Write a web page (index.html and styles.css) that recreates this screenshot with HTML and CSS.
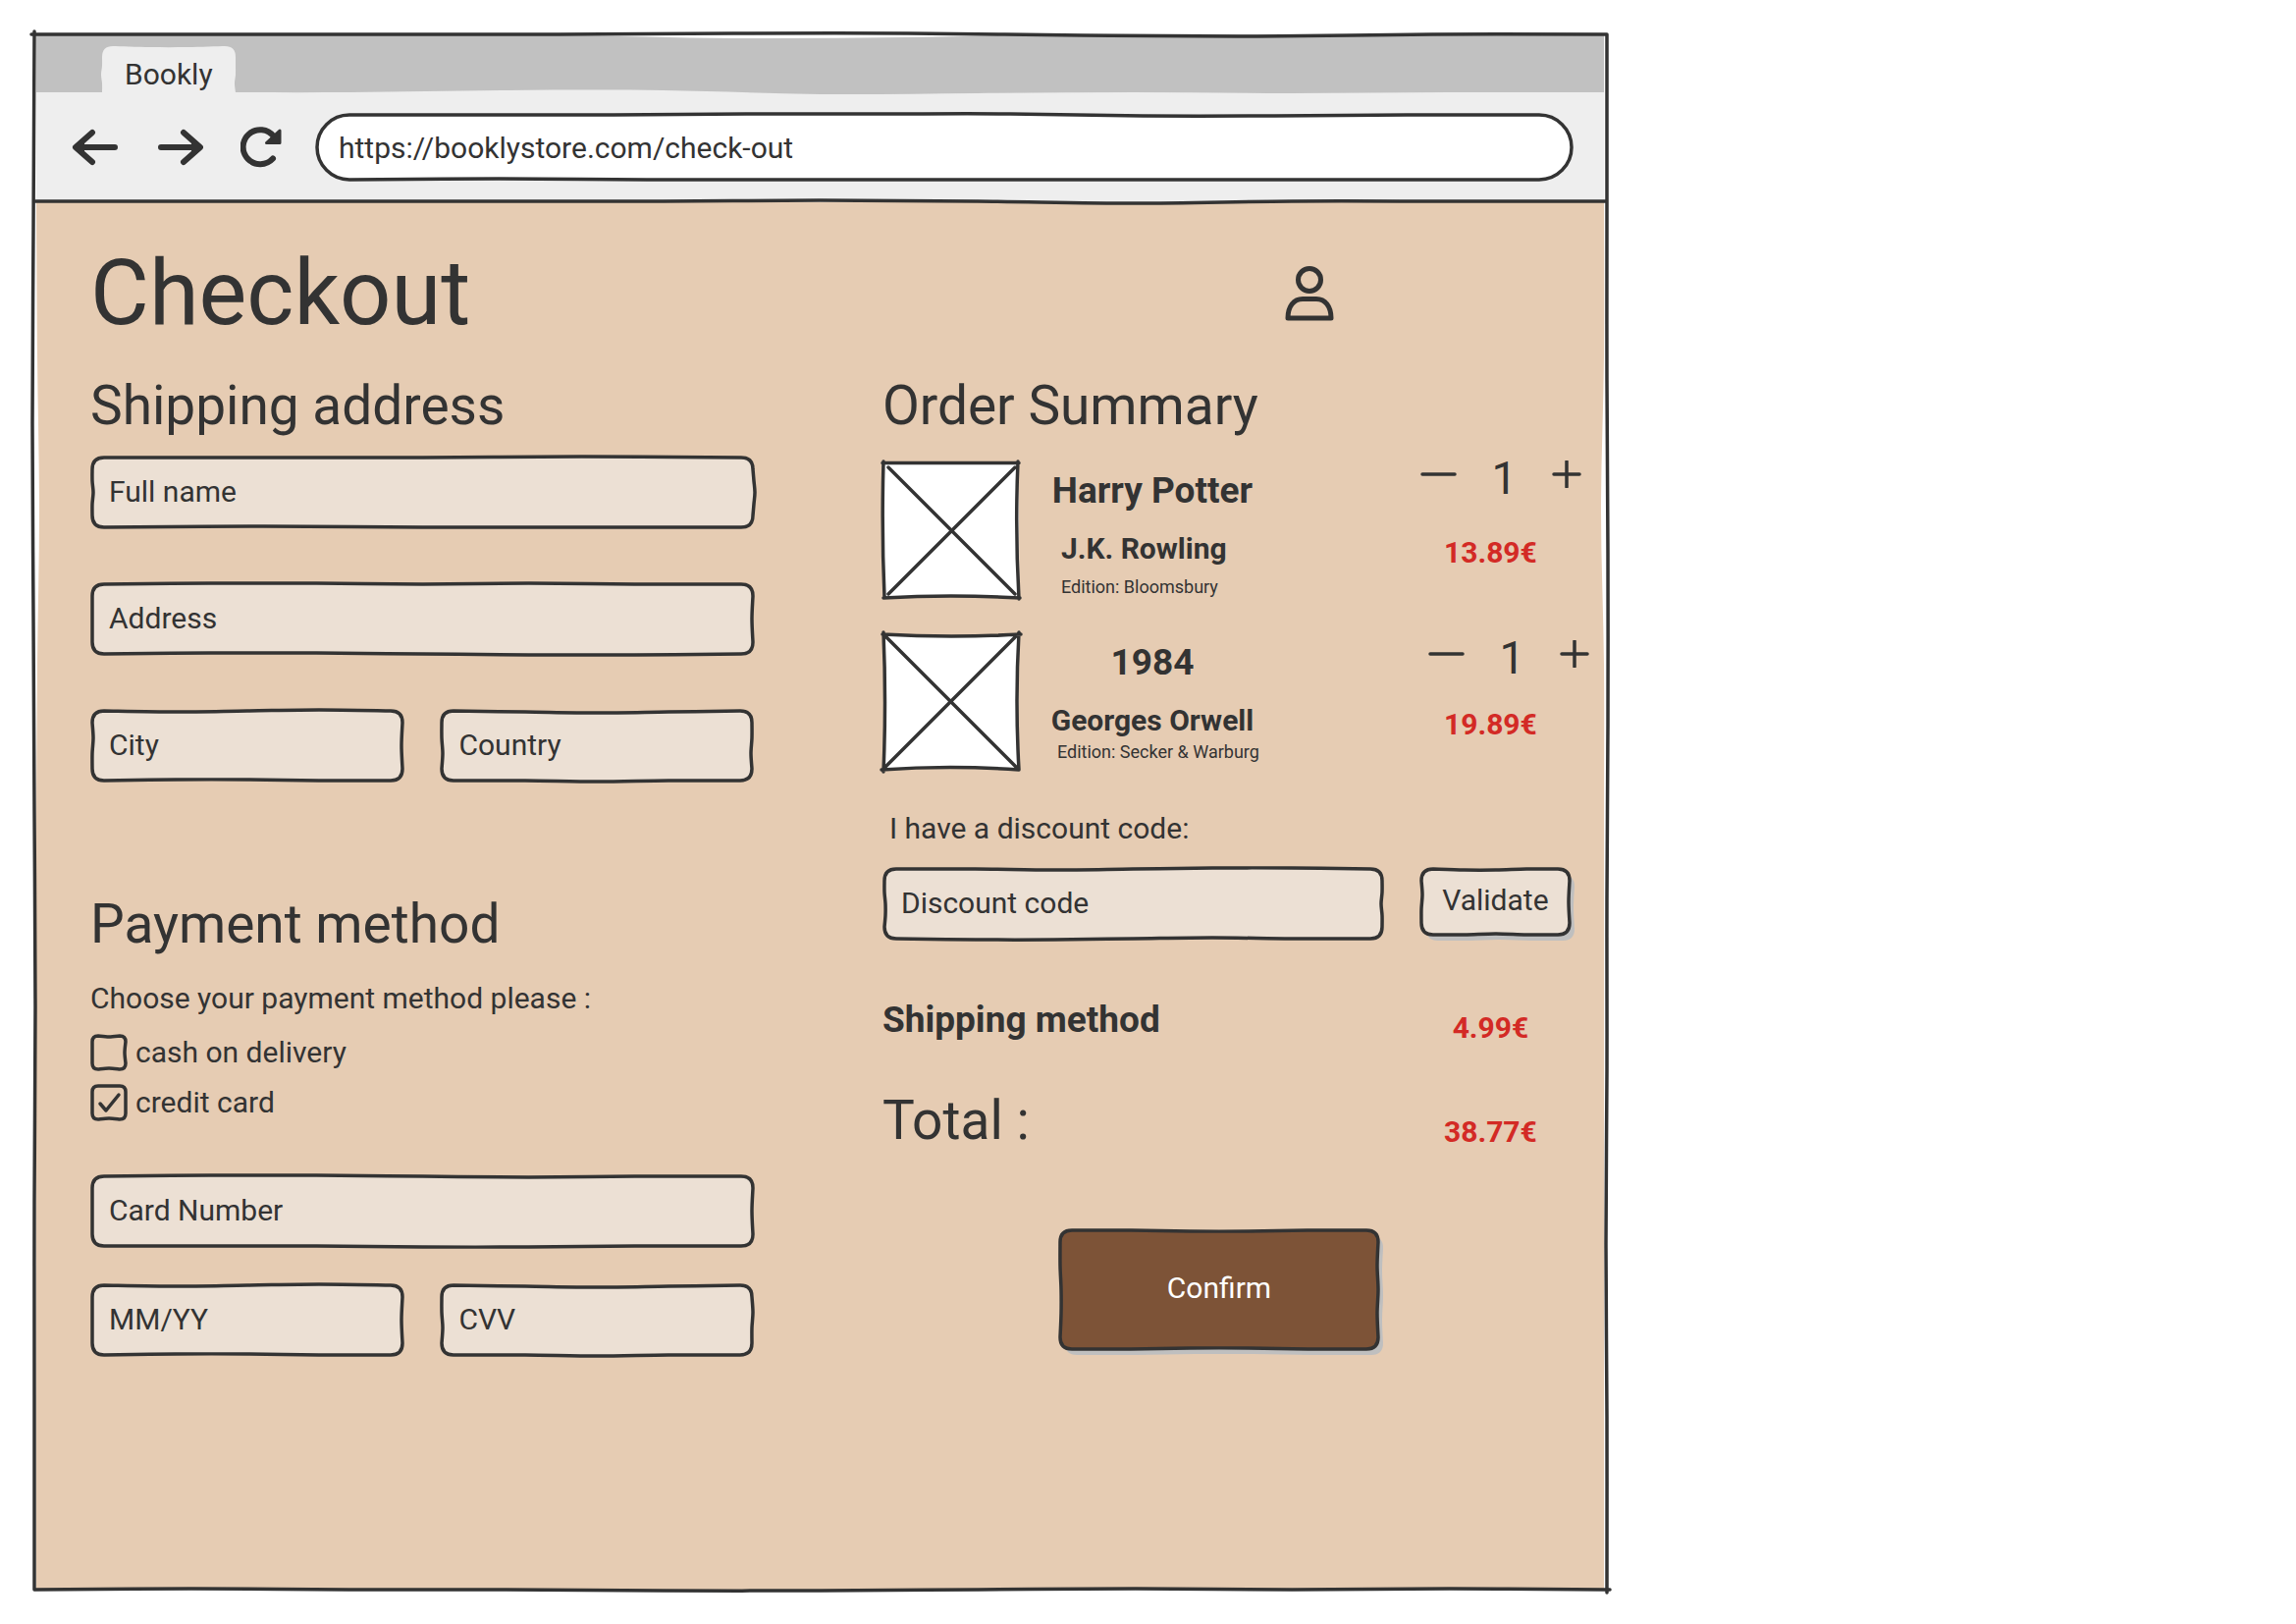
FILE: index.html
```html
<!DOCTYPE html>
<html lang="en">
<head>
<meta charset="utf-8">
<meta name="viewport" content="width=device-width, initial-scale=1">
<title>Bookly – Checkout</title>
<link rel="stylesheet" href="styles.css">
<script src="sketch.js" defer></script>
</head>
<body>
<div class="window sketch" data-radius="0" data-over="3" data-top="0 0 0 -1 -1 1 2 0" data-right="0 0 1 1 0 0 -1 0" data-bottom="-1 0 0 1 1 0 -1 0 -1" data-left="-1 -2 -1 0 1 0 0">
  <div class="tab-strip sketch fill" data-radius="0" data-top="0 0 1 4 3 0 0 0" data-bottom="0 0 -2 -2 2 1 0 1 0">
    <div class="tab sketch fill" data-radius="11" data-top="1 1" data-left="0 -1 0" data-right="0 0 -1">Bookly</div>
  </div>
  <div class="toolbar">
    <nav class="nav" aria-label="Browser">
      <button type="button" class="icon-button" aria-label="Back">
        <svg width="48" height="48" viewBox="0 0 48 48"><path d="M44 24H6M21 9 4 24l17 15" class="nav-stroke"/><path d="M1 24 13 13v22z" class="solid"/></svg>
      </button>
      <button type="button" class="icon-button" aria-label="Forward">
        <svg width="48" height="48" viewBox="0 0 48 48"><path d="M5 24h38M28 9l17 15-17 15" class="nav-stroke"/><path d="M48 24 36 13v22z" class="solid"/></svg>
      </button>
      <button type="button" class="icon-button" aria-label="Reload">
        <svg width="48" height="48" viewBox="0 0 48 48"><path d="M33 35.500A17.500 17.500 0 1 1 34 13" class="nav-stroke"/><path d="M40 7v12.500H26.500z" class="solid joint"/></svg>
      </button>
    </nav>
    <div class="address sketch" data-radius="35" data-top="0 0 -1 -1 -1 1 1 0" data-bottom="-1 0 0 0 0 0 0">
      <input type="text" aria-label="Web address" value="https://booklystore.com/check-out">
    </div>
  </div>
  <div class="rule sketch line" data-top="0 0 0 0 -1 0 2 0 0"></div>

  <main class="content sketch fill" data-radius="0" data-left="1 3 1 0 0 0 0 0" data-right="0 -3 0 0 0 0 0 0">
    <header class="columns">
      <h1>Checkout</h1>
      <a class="account" href="#account" aria-label="Account">
        <svg width="50" height="60" viewBox="0 0 50 60"><circle cx="25" cy="16" r="11.500"/><path d="M3 55c0-12 6-19.500 15-19.500h14c9 0 15 7.500 15 19.500z"/></svg>
      </a>
    </header>

    <div class="columns">
      <form class="details" onsubmit="return false">
        <section>
          <h2>Shipping address</h2>
          <div class="fields roomy">
            <div class="field sketch wide" data-top="0 0 -1" data-right="1 2 1" data-bottom="-1 0 0" data-left="0 1 0">
              <input type="text" aria-label="Full name" placeholder="Full name">
            </div>
            <div class="field sketch wide" data-top="-1 -1 0 -1 0" data-right="-1" data-bottom="-1 -1 0 1 1">
              <input type="text" aria-label="Address" placeholder="Address">
            </div>
            <div class="field sketch" data-top="1 0 -1" data-right="-1" data-bottom="-1 -1 0" data-left="1 0">
              <input type="text" aria-label="City" placeholder="City">
            </div>
            <div class="field sketch" data-top="1 2 1" data-right="0 -1" data-bottom="0 1 0" data-left="0 1">
              <input type="text" aria-label="Country" placeholder="Country">
            </div>
          </div>
        </section>

        <section class="payment">
          <h2>Payment method</h2>
          <p class="prompt" id="prompt">Choose your payment method please :</p>
          <div class="choices" role="group" aria-labelledby="prompt">
            <div class="choice">
              <span class="box sketch" data-radius="6" data-top="1" data-right="-1" data-bottom="-1"><input id="cash" type="checkbox"><svg class="check" width="38" height="38" viewBox="0 0 38 38"><path d="m10 20 6 7L29 11"/></svg></span>
              <label for="cash">cash on delivery</label>
            </div>
            <div class="choice">
              <span class="box sketch" data-radius="6" data-bottom="-1"><input id="card" type="checkbox" checked><svg class="check" width="38" height="38" viewBox="0 0 38 38"><path d="m10 20 6 7L29 11"/></svg></span>
              <label for="card">credit card</label>
            </div>
          </div>
          <div class="fields">
            <div class="field sketch wide" data-top="-1 -1 0 1 0" data-right="-1" data-bottom="0 0 1 1 0">
              <input type="text" aria-label="Card Number" placeholder="Card Number">
            </div>
            <div class="field sketch" data-top="1 0 -1" data-right="-1" data-bottom="-1 -1 0">
              <input type="text" aria-label="Expiry date" placeholder="MM/YY">
            </div>
            <div class="field sketch" data-top="1 2 1" data-right="1 0" data-bottom="0 1 0" data-left="0 1">
              <input type="text" aria-label="CVV" placeholder="CVV">
            </div>
          </div>
        </section>
      </form>

      <section class="summary">
        <h2>Order Summary</h2>
        <div class="items">
          <article class="item">
            <svg class="cover" width="142" height="142" viewBox="1 0 142 142" role="img" aria-label="Cover of Harry Potter"><path class="paper" d="M2 2.500h137.500l1 137Q70 137 2 140z"/><path d="M1 2.500h139M139 1q-3 68 1 140M141 140Q70 136 2 140M3 139Q0 70 2 1M7 7l129 129M136 7 7 136"/></svg>
            <div class="info">
              <h3>Harry Potter</h3>
              <p class="author flush">J.K. Rowling</p>
              <p class="edition">Edition: Bloomsbury</p>
            </div>
            <div class="buy">
              <div class="quantity">
                <button type="button" class="icon-button" aria-label="Fewer copies of Harry Potter"><svg width="37" height="28" viewBox="0 0 37 28"><path d="M2 14h33" class="thin"/></svg></button>
                <output>1</output>
                <button type="button" class="icon-button" aria-label="More copies of Harry Potter"><svg width="30" height="28" viewBox="0 0 30 28"><path d="M2 14h26M15 1v26" class="thin"/></svg></button>
              </div>
              <span class="price">13.89€</span>
            </div>
          </article>
          <article class="item compact">
            <svg class="cover" width="142" height="142" viewBox="1 0 142 142" role="img" aria-label="Cover of 1984"><path class="paper" d="M2 2.500q70 3 137.500 0v137Q70 136 2 140z"/><path d="M1 2q70 4 141 0M140 0q-4 70 0 140M140 140Q70 135 0 140M2 142q3-70 0-142M2 2l137 137M139 2 2 139"/></svg>
            <div class="info">
              <h3>1984</h3>
              <p class="author">Georges Orwell</p>
              <p class="edition">Edition: Secker &amp; Warburg</p>
            </div>
            <div class="buy">
              <div class="quantity">
                <button type="button" class="icon-button" aria-label="Fewer copies of 1984"><svg width="37" height="28" viewBox="0 0 37 28"><path d="M2 14h33" class="thin"/></svg></button>
                <output>1</output>
                <button type="button" class="icon-button" aria-label="More copies of 1984"><svg width="30" height="28" viewBox="0 0 30 28"><path d="M2 14h26M15 1v26" class="thin"/></svg></button>
              </div>
              <span class="price">19.89€</span>
            </div>
          </article>
        </div>

        <label class="discount-label" for="discount">I have a discount code:</label>
        <div class="discount">
          <div class="field sketch" data-top="0 1 0 -1 -1" data-right="0 -1 0" data-bottom="1 1 0 -1 0" data-left="0 1 1">
            <input id="discount" type="text" placeholder="Discount code">
          </div>
          <button type="button" class="button sketch" data-shadow="1" data-top="1 1 0" data-right="-1" data-bottom="0 -1 0" data-left="1 0">Validate</button>
        </div>

        <div class="line-item"><h3>Shipping method</h3><span class="price">4.99€</span></div>
        <div class="line-item"><h2>Total :</h2><span class="price">38.77€</span></div>
        <button type="button" class="button confirm sketch" data-shadow="1" data-top="0 1 1 0" data-right="-1 0 -1" data-bottom="0 -1 -1 0" data-left="0 1 1">Confirm</button>
      </section>
    </div>
  </main>
</div>
</body>
</html>
```

FILE: styles.css
```css
:root {
  --ink: #333;
  --sand: #e6ccb3;
  --cream: #ece0d4;
  --cocoa: #7d5337;
  --red: #d32a25;
}

* { box-sizing: border-box; }

body {
  margin: 0;
  padding: 35px;
  background: #fff;
  color: var(--ink);
  font: 30px/36px Roboto, "Liberation Sans", sans-serif;
}

h1, h2, h3, p { margin: 0; }
h1 { font-size: 92px; line-height: 108px; font-weight: 400; }
h2 { font-size: 55px; line-height: 64px; font-weight: 400; }
h3 { font-size: 37px; line-height: 44px; font-weight: 700; }

input, button {
  font: inherit;
  color: inherit;
  border: 0;
  background: none;
  padding: 0;
}
input { width: 100%; min-width: 0; }
input::placeholder { color: var(--ink); opacity: 1; }
button { cursor: pointer; }

/* Hand-drawn outlines, filled in by sketch.js */
.sketch { position: relative; isolation: isolate; --fill: none; --line: var(--ink); }
.sketch.fill { --line: none; }
.outline {
  position: absolute;
  inset: 0;
  z-index: -1;
  width: 100%;
  height: 100%;
  overflow: visible;
  pointer-events: none;
}
.outline .body {
  fill: var(--fill);
  stroke: var(--line);
  stroke-width: 3.5px;
  stroke-linecap: round;
  stroke-linejoin: round;
}
.outline .shadow { fill: #bfbfbf; }

/* Browser window */
.window {
  display: flex;
  flex-direction: column;
  width: 70.6%;
  min-width: 1400px;
  min-height: calc(100vh - 70px);
}
.window > .outline { z-index: 2; }
.tab-strip {
  --fill: #c1c1c1;
  z-index: 1;
  display: flex;
  height: 59px;
  margin: 0 3px 0 2px;
  padding: 12px 67px 0;
}
.tab { --fill: #eee; height: 47px; padding: 19px 23px 0; line-height: 20px; }
.toolbar {
  display: flex;
  align-items: center;
  gap: 28px;
  height: 115px;
  margin: -4px 3px 0 2px;
  padding: 4px 31px 0 36px;
  background: #eee;
}
.rule { height: 1px; margin-right: 1px; z-index: 1; }
.nav { display: flex; gap: 38px; }
.icon-button { display: block; flex: none; }
.icon-button svg { display: block; }
.nav-stroke { fill: none; stroke: var(--ink); stroke-width: 6px; stroke-linecap: round; stroke-linejoin: round; }
.solid { fill: var(--ink); }
.joint { stroke: var(--ink); stroke-width: 3px; stroke-linejoin: round; }
.thin { fill: none; stroke: var(--ink); stroke-width: 3.5px; stroke-linecap: round; }
.address { --fill: #fff; flex: 1; display: flex; height: 70px; padding: 3px 24px 0; }

/* Page */
.content {
  --fill: var(--sand);
  flex: 1;
  margin: 0 3px 0 2px;
  padding: 39px 15px 56px 55px;
}
.columns {
  display: grid;
  grid-template-columns: 677fr 720fr;
  column-gap: 130px;
}
header.columns { margin-bottom: 28px; }
.account { justify-self: start; align-self: start; margin: 24px 0 0 410px; }
.account svg { display: block; fill: none; stroke: var(--ink); stroke-width: 5px; stroke-linejoin: round; }

.fields {
  display: grid;
  grid-template-columns: 1fr 1fr;
  gap: 36px;
  margin-top: 19px;
}
.fields.roomy { row-gap: 54px; }
.wide { grid-column: 1 / -1; }
.field { --fill: var(--cream); display: flex; height: 75px; padding: 0 19px 2px; }

.payment { margin-top: 112px; }
.prompt { margin-top: 26px; }
.choices { display: grid; gap: 13px; margin: 18px 0 54px; }
.choice { display: flex; align-items: center; gap: 8px; }
.box { flex: none; width: 38px; height: 38px; }
.box input { appearance: none; display: block; width: 38px; height: 38px; margin: 0; }
.check { display: none; position: absolute; inset: 0; fill: none; stroke: var(--ink); stroke-width: 3.5px; stroke-linecap: round; stroke-linejoin: round; pointer-events: none; }
.box input:checked + .check { display: block; }

/* Order summary */
.items { display: grid; gap: 33px; margin-top: 24px; }
.item { display: grid; grid-template-columns: 142px 1fr 172px; }
.cover { display: block; overflow: visible; fill: none; stroke: var(--ink); stroke-width: 3.5px; stroke-linecap: round; }
.cover .paper { fill: #fff; stroke: none; }
.info { width: 266px; padding-top: 9px; text-align: center; }
.author { margin-top: 19px; font-weight: 700; }
.author.flush { padding-left: 40px; text-align: left; }
.edition { margin-top: 10px; padding-left: 40px; font-size: 18px; line-height: 22px; text-align: left; white-space: nowrap; }
.compact .edition { margin-top: 3px; padding-left: 36px; }
.buy { display: flex; flex-direction: column; }
.quantity {
  display: flex;
  justify-content: space-between;
  align-items: flex-start;
  align-self: flex-start;
  width: 164px;
  height: 76px;
}
.quantity output { font-size: 46px; line-height: 36px; }
.compact .quantity { align-self: flex-end; padding-top: 8px; }
.price { width: 143px; color: var(--red); font-weight: 700; text-align: center; }

.discount-label { display: block; margin-top: 40px; padding-left: 7px; }
.discount {
  display: flex;
  align-items: flex-start;
  gap: 36px;
  margin: 21px 18px 0 0;
}
.discount .field { flex: 1; }
.button { --fill: var(--cream); width: 155px; height: 71px; padding-bottom: 4px; }
.line-item { display: flex; justify-content: space-between; margin-top: 59px; padding-right: 29px; }
.line-item .price { align-self: flex-end; line-height: 40px; }
.line-item h3 { padding-bottom: 6px; }
.line-item + .line-item { margin-top: 42px; }
.confirm { --fill: var(--cocoa); display: block; width: 328px; height: 125px; margin: 78px 0 0 179px; color: #fff; }
```

FILE: sketch.js
```js
// Draws a slightly uneven outline behind every .sketch element.
// data-top / right / bottom / left list how far the edge strays, in pixels,
// at evenly spaced points (left to right, or top to bottom).
(function () {
  var NS = 'http://www.w3.org/2000/svg';

  function strays(el, side) {
    return (el.dataset[side] || '0').split(' ').map(Number);
  }

  // Points along one edge, from (x1, y1) to (x2, y2)
  function edge(x1, y1, x2, y2, offsets, reverse) {
    var list = [0].concat(offsets, [0]);
    if (reverse) list.reverse();
    var level = y1 === y2;
    return list.map(function (o, i) {
      var t = i / (list.length - 1);
      return [x1 + (x2 - x1) * t + (level ? 0 : o), y1 + (y2 - y1) * t + (level ? o : 0)];
    });
  }

  // Smooth curve through the points
  function curve(p) {
    var d = '';
    for (var i = 0; i < p.length - 1; i++) {
      var a = p[i - 1] || p[i], b = p[i], c = p[i + 1], e = p[i + 2] || c;
      d += 'C' + [b[0] + (c[0] - a[0]) / 6, b[1] + (c[1] - a[1]) / 6,
        c[0] - (e[0] - b[0]) / 6, c[1] - (e[1] - b[1]) / 6, c[0], c[1]].join(' ');
    }
    return d;
  }

  function draw(el, svg) {
    var filled = el.classList.contains('fill');
    var w = el.offsetWidth, h = el.offsetHeight;
    if (el.classList.contains('line')) {
      svg.innerHTML = '<path class="body" d="M0 0' + curve(edge(0, 0, w, 0, strays(el, 'top'))) + '"/>';
      return;
    }
    var r = Number(el.dataset.radius || 12);
    var i = filled || el.dataset.over ? 0 : 2;
    var x = w - i, y = h - i;
    var q = Math.min(r, (h - 2 * i) / 2);
    var d = 'M' + (i + q) + ' ' + i + curve(edge(i + q, i, x - q, i, strays(el, 'top')));
    d += 'Q' + x + ' ' + i + ' ' + x + ' ' + (i + q);
    if (el.classList.contains('address')) {
      d = 'M' + (i + q) + ' ' + i + curve(edge(i + q, i, x - q, i, strays(el, 'top'))) +
        'A' + q + ' ' + q + ' 0 0 1 ' + (x - q) + ' ' + y +
        curve(edge(x - q, y, i + q, y, strays(el, 'bottom'), true)) +
        'A' + q + ' ' + q + ' 0 0 1 ' + (i + q) + ' ' + i + 'Z';
    } else if (el.classList.contains('tab')) {
      d += curve(edge(x, i + q, x, y, strays(el, 'right'))) + 'L' + i + ' ' + y +
        curve(edge(i, y, i, i + q, strays(el, 'left'), true)) +
        'Q' + i + ' ' + i + ' ' + (i + q) + ' ' + i + 'Z';
    } else {
      d += curve(edge(x, i + q, x, y - q, strays(el, 'right')));
      d += 'Q' + x + ' ' + y + ' ' + (x - q) + ' ' + y;
      d += curve(edge(x - q, y, i + q, y, strays(el, 'bottom'), true));
      d += 'Q' + i + ' ' + y + ' ' + i + ' ' + (y - q);
      d += curve(edge(i, y - q, i, i + q, strays(el, 'left'), true));
      d += 'Q' + i + ' ' + i + ' ' + (i + q) + ' ' + i + 'Z';
    }
    // Pen strokes of the window run a little past their corners
    var o = Number(el.dataset.over || 0);
    if (o) d += 'M' + -o + ' 0H0V' + -o + 'M' + w + ' ' + (h + o) + 'V' + h + 'h' + o;
    svg.innerHTML = (el.dataset.shadow ? '<path class="shadow" transform="translate(5 6)" d="' + d + '"/>' : '') +
      '<path class="body" d="' + d + '"/>';
  }

  document.querySelectorAll('.sketch').forEach(function (el) {
    var svg = document.createElementNS(NS, 'svg');
    svg.setAttribute('class', 'outline');
    svg.setAttribute('aria-hidden', 'true');
    el.prepend(svg);
    draw(el, svg);
    new ResizeObserver(function () { draw(el, svg); }).observe(el);
  });
})();
```
